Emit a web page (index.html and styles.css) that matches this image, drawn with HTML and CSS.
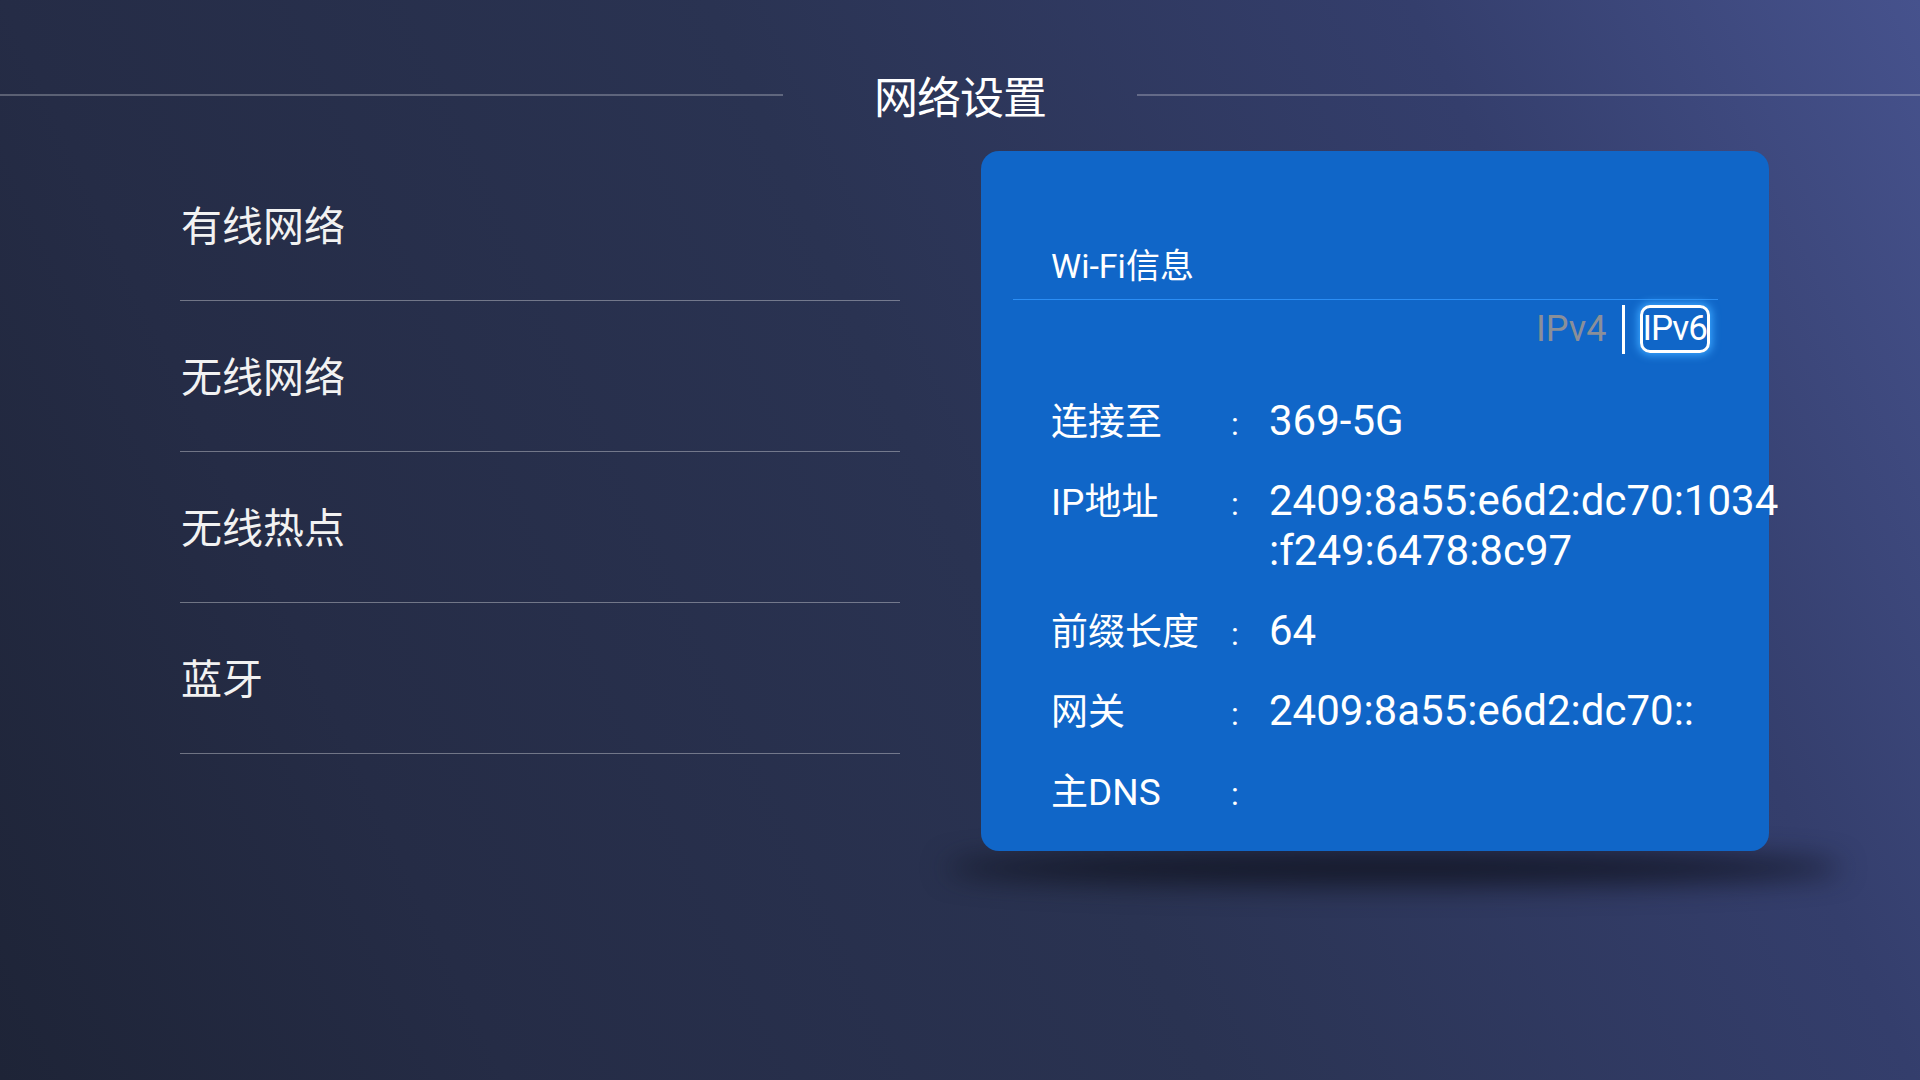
FILE: index.html
```html
<!DOCTYPE html>
<html lang="zh-CN">
<head>
    <meta charset="UTF-8">
    <meta name="viewport" content="width=device-width, initial-scale=1.0">
    <title>网络设置</title>
    <link rel="stylesheet" href="styles.css">
</head>
<body>
    <div class="screen">
        <header class="top">
            <span class="top-line"></span>
            <h1 class="top-title">网络设置</h1>
            <span class="top-line"></span>
        </header>

        <main class="main">
            <ul class="menu">
                <li class="menu-item">有线网络</li>
                <li class="menu-item">无线网络</li>
                <li class="menu-item">无线热点</li>
                <li class="menu-item">蓝牙</li>
            </ul>

            <section class="card">
                <div class="card-head">Wi-Fi信息</div>

                <div class="tabs">
                    <span class="tab">IPv4</span>
                    <span class="tab-sep"></span>
                    <span class="tab tab-on">IPv6</span>
                </div>

                <div class="info">
                    <div class="info-row">
                        <span class="info-label">连接至</span>
                        <span class="info-colon">:</span>
                        <span class="info-value">369-5G</span>
                    </div>
                    <div class="info-row">
                        <span class="info-label">IP地址</span>
                        <span class="info-colon">:</span>
                        <span class="info-value">2409:8a55:e6d2:dc70:1034<br>:f249:6478:8c97</span>
                    </div>
                    <div class="info-row">
                        <span class="info-label">前缀长度</span>
                        <span class="info-colon">:</span>
                        <span class="info-value">64</span>
                    </div>
                    <div class="info-row">
                        <span class="info-label">网关</span>
                        <span class="info-colon">:</span>
                        <span class="info-value">2409:8a55:e6d2:dc70::</span>
                    </div>
                    <div class="info-row">
                        <span class="info-label">主DNS</span>
                        <span class="info-colon">:</span>
                        <span class="info-value">&nbsp;</span>
                    </div>
                </div>
            </section>
        </main>
    </div>
</body>
</html>
```

FILE: styles.css
```css
html, body {
    margin: 0;
    padding: 0;
}

body {
    font-family: Roboto, "Noto Sans CJK SC", sans-serif;
    color: #fff;
}

.screen {
    position: relative;
    z-index: 0;
    width: 1920px;
    height: 1080px;
    overflow: hidden;
    background: linear-gradient(65deg, #1e2437 0%, #252c46 21%, #2a3352 50%, #343e6c 79%, #46528d 100%);
}

/* title bar */
.top {
    display: flex;
    align-items: center;
    height: 110px;
    padding-top: 40px;
}

.top-line {
    flex: 1;
    height: 2px;
    background-color: rgba(255, 255, 255, 0.25);
}

.top-title {
    margin: 0 91px;
    font-family: "Noto Sans CJK SC", sans-serif;
    font-size: 44px;
    font-weight: 400;
    line-height: 60px;
    letter-spacing: -1px;
}

.main {
    display: flex;
    align-items: flex-start;
    gap: 81px;
    padding-left: 180px;
}

/* left menu */
.menu {
    list-style: none;
    margin: 0;
    padding: 0;
    width: 720px;
}

.menu-item {
    display: flex;
    align-items: center;
    box-sizing: border-box;
    height: 151px;
    padding: 0 0 5px 1px;
    border-bottom: 1px solid rgba(255, 255, 255, 0.35);
    font-family: "Noto Sans CJK SC", sans-serif;
    font-size: 41px;
    color: #f2f2f2;
}

/* info card */
.card {
    position: relative;
    box-sizing: border-box;
    width: 788px;
    height: 700px;
    margin-top: 1px;
    background-color: #1066c8;
    border-radius: 18px;
}

.card::after {
    content: "";
    position: absolute;
    left: -36px;
    right: -73px;
    top: 100%;
    height: 34px;
    background-color: rgba(14, 16, 28, 0.8);
    border-radius: 50%;
    filter: blur(14px);
    z-index: -1;
}

.card-head {
    margin: 95px 51px 0 32px;
    padding: 0 0 13px 38px;
    border-bottom: 1px solid #2b8ef5;
    font-size: 34px;
    line-height: 40px;
}

.tabs {
    display: flex;
    align-items: center;
    justify-content: flex-end;
    height: 48px;
    margin: 5px 59px 0 0;
}

.tab {
    font-size: 36px;
    line-height: 42px;
    color: #8a8f99;
}

.tab-sep {
    width: 3px;
    height: 49px;
    margin: 0 15px;
    background-color: #fff;
}

.tab-on {
    box-sizing: border-box;
    height: 48px;
    padding: 0;
    color: #fff;
    font-size: 35px;
    letter-spacing: -1px;
    border: 3px solid #fff;
    border-radius: 10px;
    box-shadow: 0 0 8px 2px #3aa6ff;
}

.info {
    margin: 43px 0 0 70px;
}

.info-row {
    display: grid;
    grid-template-columns: 180px 38px auto;
    align-items: baseline;
    margin-bottom: 30px;
}

.info-label {
    font-size: 37px;
    line-height: 46px;
    white-space: nowrap;
}

.info-colon {
    font-size: 32px;
    line-height: 40px;
}

.info-value {
    font-size: 42px;
    line-height: 50px;
    white-space: nowrap;
}
```
